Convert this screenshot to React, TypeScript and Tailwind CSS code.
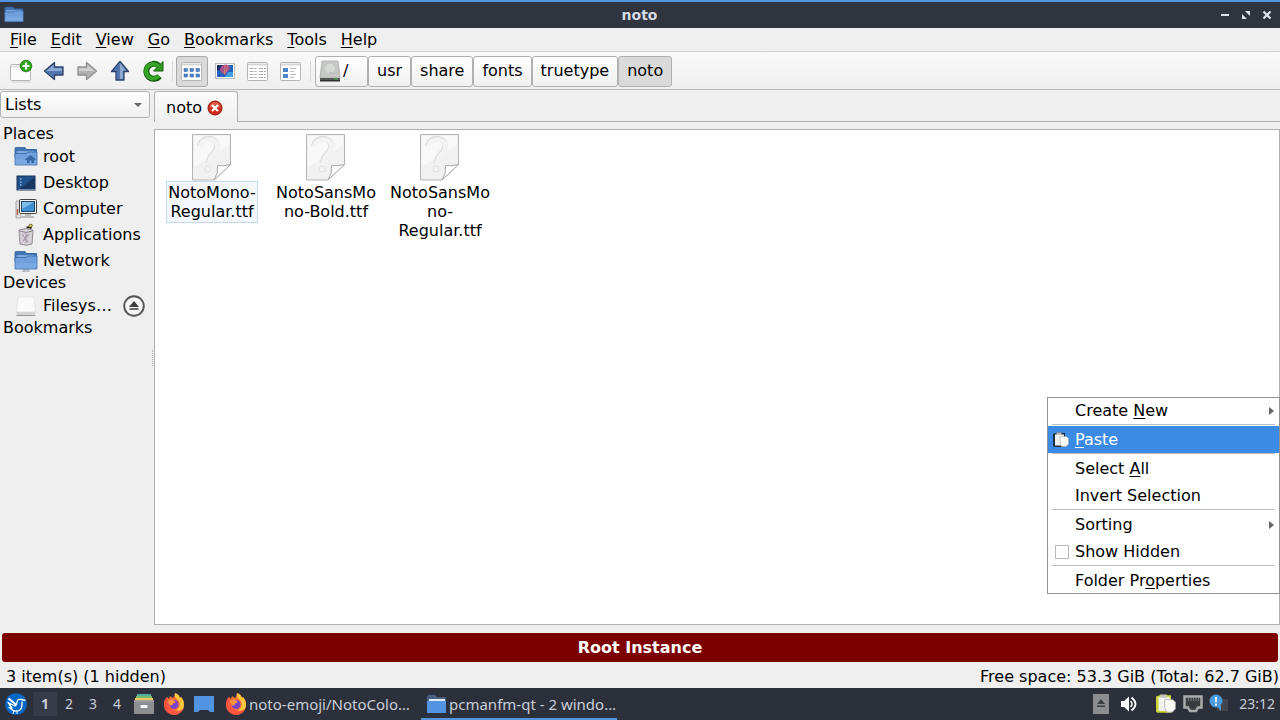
// src/App.tsx
import type { ReactNode } from 'react';

function FolderIcon({ className, home, stand }: { className?: string; home?: boolean; stand?: boolean }) {
  return (
    <svg viewBox="0 0 24 24" className={className}>
      {stand && <path d="M9 20h6l1 3H8z" fill="#b9bec4" />}
      <path d="M1 4.500V3.500Q1 2.500 2 2.500h9l1.500 2h10V12H1z" fill="#3f73b5" stroke="#2f5d9a" strokeWidth=".8" />
      <path d="M2.500 6h18v2h-18z" fill="#7fa9dd" />
      <path d="M1 8.500h11l1.500-1.500H23V20H1z" fill="#6f9fdc" stroke="#3b6cab" strokeWidth=".8" />
      <path d="M1.500 14h21v5.500h-21z" fill="#82afe6" opacity=".6" />
      {home && <path d="m11 14.500 5.500-4.500 5.500 4.500-1 1-1-.7V18h-2.500v-2.500h-2V18H13v-3.200l-1 .7z" fill="#3566a5" />}
    </svg>
  );
}

function NewTabIcon() {
  return (
    <svg viewBox="0 0 24 24" className="size-6">
      <rect x="1.500" y="5.500" width="20" height="16" rx="1" fill="#fcfcfc" stroke="#b4b4b4" />
      <path d="M2 7.500h19" stroke="#e2e2e2" strokeWidth="2" />
      <path d="M3 23h18" stroke="#ccc" strokeWidth=".8" />
      <circle cx="17" cy="7" r="5.800" fill="#32a21d" stroke="#1c7a10" strokeWidth=".8" />
      <path d="M17 3.500v7M13.500 7h7" stroke="#fff" strokeWidth="2.200" />
    </svg>
  );
}

// bevelled arrow, drawn pointing left
function ArrowIcon({ className, dark }: { className: string; dark: boolean }) {
  return (
    <svg viewBox="0 0 24 24" className={className}>
      <path
        d="M2.500 12 12.500 3.500V8H21v8h-8.500v4.500z"
        fill={dark ? '#6489bf' : '#bdbdbd'}
        stroke={dark ? '#2a4068' : '#8e8e8e'}
        strokeWidth="1.300"
        strokeLinejoin="round"
      />
      <path d="M4.500 12 11.500 6v3.200H20V12z" fill="#fff" opacity=".28" />
      <path d="M4.500 12.300H20V15h-8.500v3z" fill={dark ? '#3b5f98' : '#a3a3a3'} opacity=".5" />
    </svg>
  );
}

function ReloadIcon() {
  return (
    <svg viewBox="0 0 24 24" className="size-6">
      <path d="M18.500 17.200A7.500 7.500 0 1 1 17.500 6.500" fill="none" stroke="#145a0e" strokeWidth="6" />
      <path d="M22 2.500V12h-9.500z" fill="#2d9c1d" stroke="#145a0e" strokeWidth="1" />
      <path d="M18 16.800A7.300 7.300 0 1 1 17.500 7" fill="none" stroke="#39a528" strokeWidth="4" />
    </svg>
  );
}

function WindowFrame({ children }: { children: ReactNode }) {
  return (
    <svg viewBox="0 0 24 24" className="size-6">
      <rect x="1.500" y="3.500" width="20" height="18" rx="1" fill="#fff" stroke="#b4b4b4" />
      <path d="M2 5.500h19" stroke="#d4d4d4" strokeWidth="2" />
      {children}
    </svg>
  );
}

function IconViewIcon() {
  return (
    <WindowFrame>
      {[9.5, 15].map((y) =>
        [4, 10, 16].map((x) => <rect key={`${x}-${y}`} x={x} y={y} width="3.500" height="3" fill="#4b83cd" stroke="#2b5da4" strokeWidth=".5" />)
      )}
    </WindowFrame>
  );
}

function ThumbnailIcon() {
  return (
    <svg viewBox="0 0 24 24" className="size-6">
      <rect x="2.500" y="4.500" width="19" height="15" fill="#fff" stroke="#bbb" />
      <rect x="4" y="6" width="16" height="12" fill="#2463bd" />
      <path d="M4 6h7l-3 4-4 2z" fill="#172c67" />
      <path d="M15 13h5v5h-8z" fill="#41a0df" />
      <path d="M8 7.500Q12 4 16 7q3 2.500-3 7l-1 2.500-1.500-1.500Q5 12 8 7.500z" fill="#a8508e" />
      <path d="M12 5.800 11.500 15M15 6.500 12.500 14" stroke="#e08b6c" strokeWidth=".8" />
    </svg>
  );
}

function CompactViewIcon() {
  return (
    <WindowFrame>
      {[9.5, 12.5, 15.5, 18.5].map((y) => (
        <path key={y} d={`M3.500 ${y}h7M13 ${y}h7`} stroke="#aaa" strokeDasharray="4 1 2 1" />
      ))}
    </WindowFrame>
  );
}

function DetailViewIcon() {
  return (
    <WindowFrame>
      <rect x="4" y="9" width="5" height="4" fill="#4b83cd" />
      <rect x="4" y="15" width="5" height="4" fill="#4b83cd" />
      <path d="M11 9.500h6M11 12.500h4M11 15.500h6M11 18.500h4" stroke="#bbb" />
    </WindowFrame>
  );
}

function DriveIcon() {
  return (
    <svg viewBox="0 0 22 22" className="size-[22px]">
      <path d="M3 1h16l2 17H1z" fill="#c6c8c6" stroke="#aaa" strokeWidth=".8" />
      <circle cx="11" cy="8.500" r="5.500" fill="#d6d8d6" stroke="#bcbebc" strokeWidth=".7" />
      <path d="m10 12 5 2" stroke="#b0b0b0" />
      <path d="M1 18h20v3H1z" fill="#555856" />
      <path d="M1 20h20v1.500H1z" fill="#303331" />
      <path d="M15 19h4" stroke="#5bc452" strokeWidth=".8" />
    </svg>
  );
}

function CloseTabIcon() {
  return (
    <svg viewBox="0 0 16 16" className="size-4">
      <circle cx="8" cy="8" r="7" fill="#cf2e1d" stroke="#8f180e" />
      <path d="M2.500 7.500a5.500 5.500 0 0 1 11 0z" fill="#eb8a70" opacity=".5" />
      <path d="m5 5 6 6M11 5l-6 6" stroke="#fff" strokeWidth="2.200" />
    </svg>
  );
}

function DesktopIcon() {
  return (
    <svg viewBox="0 0 24 24" className="size-6">
      <rect x="3" y="5" width="18" height="14" fill="#20518b" stroke="#1a3153" />
      <path d="M4 19 21 6v13z" fill="#163761" />
      <path d="M6 8h1.500M6 11h1.500M6 14h1.500" stroke="#8fb2d8" strokeWidth="1.500" />
      <path d="M4 18.500h17" stroke="#6e8aad" />
    </svg>
  );
}

function ComputerIcon() {
  return (
    <svg viewBox="0 0 24 24" className="size-6">
      <path d="M2 4h5v17H2z" fill="#ddd" stroke="#999" strokeWidth=".8" />
      <path d="M3.500 12v6" stroke="#b85e43" strokeWidth="1.500" />
      <rect x="5.500" y="2.500" width="17" height="14" rx="1" fill="#f5f5f5" stroke="#444" />
      <rect x="7.500" y="4.500" width="13" height="10" fill="#3f8fd4" stroke="#20486f" />
      <path d="M8 5h12L8 12z" fill="#9fd0f3" opacity=".7" />
      <path d="M11 17h6v2h3v2H8v-2h3z" fill="#bbb" />
    </svg>
  );
}

function ApplicationsIcon() {
  return (
    <svg viewBox="0 0 24 24" className="size-6">
      <path d="M12 8 16 1l2.500 1L15 9z" fill="#e3cf4a" stroke="#575217" strokeWidth=".8" />
      <path d="m12.500 4 5 1" stroke="#222" strokeWidth="1.500" />
      <path d="M5 7q7-3 14 0l-1 14q-6 2.500-12 0z" fill="#d7d2d7" stroke="#938993" />
      <path d="M5.500 8q7 3 13 0" fill="none" stroke="#8c818c" />
      <path d="m8 11 6 8M15 11l-6 7M12 10v10" stroke="#a898a9" strokeWidth="1.200" />
    </svg>
  );
}

function FilesystemIcon() {
  return (
    <svg viewBox="0 0 24 24" className="size-6">
      <path d="M4 3h16l1.500 15h-19z" fill="#fafafa" stroke="#e0e0e0" strokeWidth=".8" />
      <path d="M2.500 18h19v3h-19z" fill="#d4d4d4" />
      <path d="M2.500 21.500h19" stroke="#999" />
    </svg>
  );
}

function EjectIcon() {
  return (
    <svg viewBox="0 0 22 22" className="size-[22px]">
      <circle cx="11" cy="11" r="9.800" fill="#f7f7f7" stroke="#555" strokeWidth="1.900" />
      <path d="m11 6 5 6H6z" fill="#3d3d3d" />
      <path d="M6.500 14h9" stroke="#3d3d3d" strokeWidth="1.500" />
    </svg>
  );
}

function UnknownFileIcon() {
  return (
    <svg viewBox="0 0 40 47" className="h-[47px] w-10">
      <path d="M.5.500h38v30L22 46H.5z" fill="#f1f1f1" stroke="#b3b3b3" />
      <path d="M2 2h35v9L2 33z" fill="#f8f8f8" />
      <path d="M8 12c1-10 17-10 17 0 0 7-8 9-8 15v2" fill="none" stroke="#dcdcdc" strokeWidth="5.500" />
      <path d="M8.500 12.500c1-9.500 17-9.500 17 0 0 7-8 9-8 15v2" fill="none" stroke="#f3f3f3" strokeWidth="4.500" />
      <circle cx="16" cy="35" r="3" fill="#f3f3f3" stroke="#e0e0e0" />
      <path d="M38.500 30.500q-8 2-13 1 1 8-3.500 14.500z" fill="#fff" stroke="#aaa" strokeLinejoin="round" />
    </svg>
  );
}

function PasteIcon({ className, board }: { className: string; board: string }) {
  return (
    <svg viewBox="0 0 16 16" className={className}>
      <path d="M0 2 3 1V.5h6V1h3v14H1L0 14z" fill={board} />
      <path d="M2 2.500h9v11H2z" fill="#f1f1ee" />
      <path d="M3.500.500h5v2.500h-5z" fill="#c4c4c4" />
      <path d="M7 4.500h6.500l2 2V12l-2.500 2.500H8.500L7 11z" fill="#fafaf7" stroke="#aaa" strokeWidth=".6" />
    </svg>
  );
}

function LubuntuIcon() {
  return (
    <svg viewBox="0 0 24 24" className="size-6">
      <circle cx="12" cy="12" r="10.800" fill="#0068c8" />
      <path d="m4.500 6.500 8 6.500" stroke="#fff" strokeWidth="2" />
      <path d="M21.500 8.500 17.500 7.500q-4-1-4.500 2.500 0 3-2 4L4 10.500l4 5.500-3-.5 5 3.500q6 1 7.500-3.500.8-3.500.5-6" fill="none" stroke="#fff" strokeWidth="1.300" strokeLinejoin="round" />
      <path d="m10 18-1 4M13 18.500v3.500" stroke="#fff" strokeWidth="1" />
    </svg>
  );
}

function CabinetIcon() {
  return (
    <svg viewBox="0 0 20 20" className="size-5">
      <path d="M3 0h14v5H3z" fill="#4fae9d" />
      <path d="M2 2h16v4H2z" fill="#76b96c" />
      <path d="M1 4h18v4H1z" fill="#f1c75b" />
      <rect y="6" width="20" height="14" rx="1" fill="#8d8f90" />
      <path d="M0 7h20" stroke="#aaa" />
      <rect x="6.500" y="11" width="7" height="3" rx="1" fill="#fff" />
    </svg>
  );
}

function FirefoxIcon() {
  return (
    <svg viewBox="0 0 22 22" className="size-[22px] shrink-0">
      <path d="M4 4q-3 3-3 8a10 10 0 0 0 20 0q0-5-3-8l-1 1q-1-3-5-5 0 3-2 5L7 3 6 6z" fill="#ff7139" />
      <path d="M12 0q-1 4 2 6 4 3 2 8-1 4-6 5 10 3 11-7 0-5-3-8l-1 1q-1-4-5-5z" fill="#ffc83c" />
      <path d="M1 12q1 8 10 10 6 0 9-6-8 5-14-2L4 4q-3 3-3 8z" fill="#ff5540" />
      <circle cx="11" cy="11.500" r="4.500" fill="#7544c8" />
      <path d="M5 8q4-2 7 0 1 2-2 2.500 0 2-3 2z" fill="#ff9640" />
    </svg>
  );
}

function SpeakerIcon() {
  return (
    <svg viewBox="0 0 16 16" className="size-4">
      <path d="M0 5h3l5-4.500v15L3 11H0z" fill="#fff" />
      <path d="M9.500 5q3 3 0 6" fill="none" stroke="#fff" strokeWidth="1.500" />
      <path d="M10.500 1.500q8 6.500 0 13" fill="none" stroke="#fff" strokeWidth="1.800" />
    </svg>
  );
}

function NetworkTrayIcon() {
  return (
    <svg viewBox="0 0 20 20" className="size-5">
      <path d="M1.500 2.500h17v11H15L13 17H7l-2-3.500H1.500z" fill="#3a3b3f" stroke="#a9aaac" strokeWidth="2.500" />
      <path d="M5.500 4v3M8 4v3M10.500 4v3M13 4v3M15.500 4v3" stroke="#888" strokeWidth=".9" />
    </svg>
  );
}

function NotifyIcon() {
  return (
    <svg viewBox="0 0 20 20" className="size-5">
      <path d="M8 5h11v12H8z" fill="#42454b" />
      <circle cx="7" cy="7" r="6.500" fill="#4a9bdc" />
      <path d="m8 12 4 5v-5z" fill="#4a9bdc" />
      <path d="M7 3v5M7 9.500v2" stroke="#fff" strokeWidth="2" />
    </svg>
  );
}

const menus = ['File', 'Edit', 'View', 'Go', 'Bookmarks', 'Tools', 'Help'];

const navTools = [
  { label: 'New Tab', icon: <NewTabIcon /> },
  { label: 'Back', icon: <ArrowIcon className="size-6" dark /> },
  { label: 'Forward', icon: <ArrowIcon className="size-6 -scale-x-100" dark={false} /> },
  { label: 'Up', icon: <ArrowIcon className="size-6 rotate-90" dark /> },
  { label: 'Reload', icon: <ReloadIcon /> },
];

const viewTools = [
  { label: 'Icon View', icon: <IconViewIcon />, active: true },
  { label: 'Thumbnail View', icon: <ThumbnailIcon /> },
  { label: 'Compact View', icon: <CompactViewIcon /> },
  { label: 'Detailed List', icon: <DetailViewIcon /> },
];

const path = ['usr', 'share', 'fonts', 'truetype', 'noto'];

const places = [
  { label: 'root', icon: <FolderIcon className="size-6" home /> },
  { label: 'Desktop', icon: <DesktopIcon /> },
  { label: 'Computer', icon: <ComputerIcon /> },
  { label: 'Applications', icon: <ApplicationsIcon /> },
  { label: 'Network', icon: <FolderIcon className="size-6" stand /> },
];

const files = [
  { lines: ['NotoMono-', 'Regular.ttf'], focused: true },
  { lines: ['NotoSansMo', 'no-Bold.ttf'] },
  { lines: ['NotoSansMo', 'no-', 'Regular.ttf'] },
];

// underlines the mnemonic letter of a label
function Mnemonic({ text, at = 0 }: { text: string; at?: number }) {
  return (
    <span className="whitespace-pre">
      {text.slice(0, at)}
      <span className="underline underline-offset-2">{text[at]}</span>
      {text.slice(at + 1)}
    </span>
  );
}

function MenuSeparator() {
  return <div className="mx-[5px] h-0.5 border-t border-[#bdbdbd]" />;
}

function MenuRow({ children, icon, submenu, active }: { children: ReactNode; icon?: ReactNode; submenu?: boolean; active?: boolean }) {
  return (
    <button
      type="button"
      role="menuitem"
      className={`flex h-[27px] w-full items-center pr-1.5 pl-1.5 text-left ${active ? 'bg-[#3b8ae6] text-white' : ''}`}
    >
      <span className="w-[22px]">{icon}</span>
      <span className="flex-1">{children}</span>
      {submenu && (
        <svg viewBox="0 0 5 8" className="h-2 w-[5px]">
          <path d="M0 0 5 4 0 8z" fill="#666" />
        </svg>
      )}
    </button>
  );
}

function ContextMenu() {
  return (
    <div role="menu" className="absolute top-[397px] right-0 w-[233px] bg-white outline outline-[#929292] -outline-offset-1">
      <MenuRow submenu><Mnemonic text="Create New" at={7} /></MenuRow>
      <MenuSeparator />
      <MenuRow active icon={<PasteIcon className="size-4" board="#1d2b3a" />}><Mnemonic text="Paste" /></MenuRow>
      <MenuSeparator />
      <MenuRow><Mnemonic text="Select All" at={7} /></MenuRow>
      <MenuRow>Invert Selection</MenuRow>
      <MenuSeparator />
      <MenuRow submenu>Sorting</MenuRow>
      <label className="flex h-[27px] items-center pl-2">
        <input type="checkbox" className="mr-1.5 size-3.5 appearance-none border border-[#b8b8b8] bg-white" />
        Show Hidden
      </label>
      <MenuSeparator />
      <MenuRow><Mnemonic text="Folder Properties" at={9} /></MenuRow>
    </div>
  );
}

function TitleBar() {
  return (
    <header className="flex h-7 items-center border-t-2 border-[#5294e2] bg-[#2f343f] pr-[5px] pl-1">
      <div className="flex-1">
        <FolderIcon className="size-5" />
      </div>
      <h1 className="text-sm font-bold text-[#d3dae3]">noto</h1>
      <div className="flex flex-1 justify-end gap-[5px] text-[#dfe5ec]">
        <button type="button" aria-label="Minimize">
          <svg viewBox="0 0 16 16" className="size-4"><path d="M4 8h8" stroke="currentColor" strokeWidth="2" /></svg>
        </button>
        <button type="button" aria-label="Restore">
          <svg viewBox="0 0 16 16" className="size-4"><path d="M7 4h5v5zM4 7v5h5z" fill="currentColor" /></svg>
        </button>
        <button type="button" aria-label="Close">
          <svg viewBox="0 0 16 16" className="size-4"><path d="m4.500 4.500 7 7M11.500 4.500l-7 7" stroke="currentColor" strokeWidth="2.200" /></svg>
        </button>
      </div>
    </header>
  );
}

function Toolbar() {
  return (
    <div className="flex h-[38px] items-center border-b border-[#b9b9b9] bg-linear-to-b from-[#f9f9f9] to-[#efefef] pt-px pl-[5px]">
      <div className="flex gap-px">
        {navTools.map((tool) => (
          <button key={tool.label} type="button" aria-label={tool.label} className="flex h-[31px] w-8 items-center justify-center">
            {tool.icon}
          </button>
        ))}
      </div>
      <div className="mx-[3px] h-5 w-px bg-[#d8d8d8]" />
      <div className="flex gap-px">
        {viewTools.map((tool) => (
          <button
            key={tool.label}
            type="button"
            aria-label={tool.label}
            className={`flex h-[31px] w-8 items-center justify-center rounded-[3px] ${tool.active ? 'border border-[#a8a8a8] bg-[#dadada]' : ''}`}
          >
            {tool.icon}
          </button>
        ))}
      </div>
      <div className="mr-1 ml-[3px] h-5 w-px bg-[#d8d8d8]" />
      <nav className="flex">
        <button type="button" className="flex h-[31px] w-[53px] items-center gap-0.5 rounded-[3px] border border-[#b0b0b0] bg-linear-to-b from-white to-[#f0f0f0] pl-[3px]">
          <DriveIcon />/
        </button>
        {path.map((part) => (
          <button
            key={part}
            type="button"
            className={`h-[31px] rounded-[3px] border border-[#b0b0b0] px-2 ${part === 'noto' ? 'bg-[#dadada]' : 'bg-linear-to-b from-white to-[#f0f0f0]'}`}
          >
            {part}
          </button>
        ))}
      </nav>
    </div>
  );
}

function Sidebar() {
  return (
    <aside className="w-[150px] shrink-0 pt-px">
      <div className="relative">
        <select aria-label="Side pane" className="h-[27px] w-full appearance-none rounded-[3px] border border-[#b0b0b0] bg-linear-to-b from-white to-[#f0f0f0] pl-1">
          <option>Lists</option>
        </select>
        <svg viewBox="0 0 8 4" className="pointer-events-none absolute top-3 right-2 h-1 w-2">
          <path d="M0 0h8L4 4z" fill="#666" />
        </svg>
      </div>
      <h2 className="mt-1.5 h-[19px] pl-[3px] leading-[19px]">Places</h2>
      {places.map((place) => (
        <button key={place.label} type="button" className="flex h-[26px] w-full items-center gap-[5px] pt-0.5 pl-3.5 text-left">
          {place.icon}
          {place.label}
        </button>
      ))}
      <h2 className="h-[19px] pl-[3px] leading-[19px]">Devices</h2>
      <div className="flex h-[26px] items-center justify-between pt-0.5 pr-[5px] pl-3.5">
        <button type="button" className="flex items-center gap-[5px]">
          <FilesystemIcon />
          Filesys…
        </button>
        <button type="button" aria-label="Eject">
          <EjectIcon />
        </button>
      </div>
      <h2 className="h-[19px] pl-[3px] leading-[19px]">Bookmarks</h2>
    </aside>
  );
}

// splitter grip between the side pane and the folder
function Splitter() {
  return (
    <div className="flex w-1 shrink-0 items-center justify-end pr-px">
      <div className="h-4 w-px border-l border-dotted border-[#b0b0b0]" />
    </div>
  );
}

function FolderPane() {
  return (
    <section className="flex min-w-0 flex-1 flex-col">
      <div className="flex h-8 items-end">
        <div className="flex h-[31px] w-[84px] items-center justify-between rounded-t-[3px] border border-b-0 border-[#b0b0b0] bg-linear-to-b from-[#fbfbfb] to-[#efefef] pt-px pr-3.5 pl-[11px]">
          <span>noto</span>
          <button type="button" aria-label="Close tab">
            <CloseTabIcon />
          </button>
        </div>
        <div className="flex-1 border-b border-[#b0b0b0]" />
      </div>
      <div className="h-[7px]" />
      <ul className="flex flex-1 items-start border border-[#b0b0b0] bg-white pt-1">
        {files.map((file) => (
          <li key={file.lines.join('')} className="flex w-[114px] flex-col items-center">
            <UnknownFileIcon />
            <div className={`flex flex-col items-center border px-px pt-px pb-px leading-[19px] ${file.focused ? 'border-[#c3d8ee] bg-[#f4f8fd]' : 'border-transparent'}`}>
              {file.lines.map((line) => (
                <span key={line}>{line}</span>
              ))}
            </div>
          </li>
        ))}
      </ul>
    </section>
  );
}

function Taskbar() {
  return (
    <footer className="flex h-8 items-center bg-[#2c303b] pr-[5px] pl-1 font-['Noto_Sans',sans-serif] text-[15px] text-[#c8ced8]">
      <button type="button" aria-label="Application menu"><LubuntuIcon /></button>
      <div className="ml-[5px] flex">
        {['1', '2', '3', '4'].map((n) => (
          <button key={n} type="button" className={`h-6 w-6 text-sm ${n === '1' ? 'bg-[#363b47] font-bold' : ''}`}>
            {n}
          </button>
        ))}
      </div>
      <div className="ml-[5px] flex items-center gap-[9px]">
        <button type="button" aria-label="File manager"><CabinetIcon /></button>
        <button type="button" aria-label="Firefox"><FirefoxIcon /></button>
        <button type="button" aria-label="Show desktop">
          <svg viewBox="0 0 20 16" className="h-4 w-5"><path d="M0 0h20v16h-4l-2-2H6l-2 2H0z" fill="#5294e2" /></svg>
        </button>
      </div>
      <button type="button" className="ml-[11px] flex h-8 w-[196px] items-center gap-0.5 whitespace-nowrap">
        <FirefoxIcon />
        noto-emoji/NotoColo…
      </button>
      <button type="button" className="flex h-8 w-[196px] items-center gap-0.5 border-y-2 border-t-transparent border-b-[#5294e2] pl-1.5 whitespace-nowrap">
        <svg viewBox="0 0 20 18" className="h-[18px] w-5 shrink-0">
          <path d="M0 2q0-2 2-2h6l2 2h8q1 0 1 2v4H0z" fill="#4a607d" />
          <path d="M2 4h16v4H2z" fill="#e4eefa" />
          <path d="M0 6h19v12H0z" fill="#5294e2" />
        </svg>
        pcmanfm-qt - 2 windo…
      </button>
      <div className="ml-auto flex items-center">
        <svg viewBox="0 0 16 20" className="mr-3 h-5 w-4">
          <path d="M0 0h16v20H0z" fill="#8c8d90" />
          <path d="m8 5 4 5H4zM4 11.500h8v1.500H4z" fill="#3b3d42" />
        </svg>
        <SpeakerIcon />
        <PasteIcon className="mr-[7px] ml-[19px] size-5" board="#c8d43a" />
        <NetworkTrayIcon />
        <span className="mr-2.5 ml-1.5"><NotifyIcon /></span>
        <time className="text-sm">23:12</time>
      </div>
    </footer>
  );
}

export default function App() {
  return (
    <div className="relative flex min-h-screen flex-col bg-[#efefef] font-['DejaVu_Sans',sans-serif] text-base text-black">
      <TitleBar />
      <div className="flex h-6 items-center border-b border-[#d2d2d2] pl-[3px]">
        {menus.map((menu) => (
          <button key={menu} type="button" className="px-[7px]">
            <Mnemonic text={menu} />
          </button>
        ))}
      </div>
      <Toolbar />
      <main className="flex flex-1">
        <Sidebar />
        <Splitter />
        <FolderPane />
      </main>
      <div className="mx-0.5 mt-2 flex h-[29px] items-center justify-center rounded-[3px] bg-[#7d0000] font-bold text-white">
        Root Instance
      </div>
      <div className="flex h-[26px] items-center justify-between pt-[3px] pr-px pl-1.5">
        <span>3 item(s) (1 hidden)</span>
        <span>Free space: 53.3 GiB (Total: 62.7 GiB)</span>
      </div>
      <Taskbar />
      <ContextMenu />
    </div>
  );
}
